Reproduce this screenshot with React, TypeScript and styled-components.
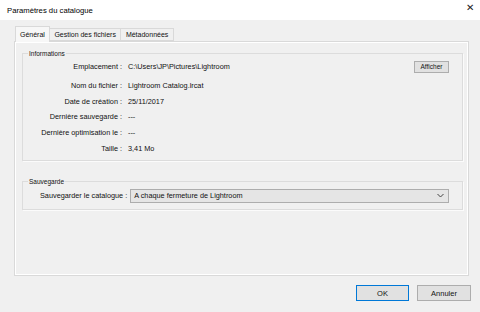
import React from "react";
import styled, { createGlobalStyle } from "styled-components";

const GlobalStyle = createGlobalStyle`
  html, body {
    margin: 0;
    padding: 0;
    background: #f0f0f0;
  }
  body {
    font-family: "Liberation Sans", Arial, sans-serif;
    color: #111;
  }
`;

const Window = styled.div`
  width: 480px;
  height: 312px;
  display: flex;
  flex-direction: column;
  background: #f0f0f0;
  overflow: hidden;
`;

const TitleBar = styled.div`
  height: 20px;
  flex: none;
  background: #ffffff;
  display: flex;
  align-items: center;
  justify-content: space-between;
  padding: 0 6px 0 7px;
  font-size: 7.7px;
  color: #000;
`;

const Close = styled.span`
  font-size: 10px;
  line-height: 1;
  color: #222;
  margin-top: -4px;
`;

const Body = styled.div`
  flex: 1;
  display: flex;
  flex-direction: column;
  padding: 6px 11px 0 14px;
`;

const TabStrip = styled.div`
  display: flex;
  align-items: flex-end;
  height: 15px;
  padding-left: 1px;
  position: relative;
  z-index: 1;
`;

const Tab = styled.div<{ active?: boolean }>`
  height: ${({ active }) => (active ? "16px" : "13px")};
  margin-bottom: ${({ active }) => (active ? "-1px" : "0")};
  padding: 0 ${({ active }) => (active ? "4px" : "4.5px")};
  box-sizing: border-box;
  display: flex;
  align-items: center;
  font-size: 7px;
  background: ${({ active }) => (active ? "#f7f7f7" : "#f0f0f0")};
  border: 1px solid #d9d9d9;
  border-bottom: ${({ active }) => (active ? "none" : "1px solid #d9d9d9")};
  margin-left: ${({ active }) => (active ? "0" : "-1px")};
`;

const Panel = styled.div`
  height: 235px;
  flex: none;
  box-sizing: border-box;
  border: 1px solid #d9d9d9;
  box-shadow: inset 1px 1px 0 #ffffff, inset -1px -1px 0 #ffffff;
  padding: 8px 5px 0 7px;
  display: flex;
  flex-direction: column;
  gap: 17px;
`;

const Group = styled.fieldset<{ h: number }>`
  margin: 0;
  height: ${({ h }) => h}px;
  box-sizing: border-box;
  border: 1px solid #dcdcdc;
  box-shadow: 1px 1px 0 #fbfbfb;
  padding: 0;
  position: relative;
`;

const Legend = styled.legend`
  font-size: 6.5px;
  padding: 0 1px;
  margin-left: 5px;
  line-height: 7px;
`;

const InfoGrid = styled.div`
  display: grid;
  grid-template-columns: 99px 1fr auto;
  grid-auto-rows: auto;
  column-gap: 6px;
  align-items: center;
  padding: 2px 13px 0 0;
`;

const Label = styled.div`
  text-align: right;
  font-size: 7.3px;
  white-space: nowrap;
  height: 15.8px;
  line-height: 15.8px;
`;

const Value = styled.div`
  font-size: 7.3px;
  white-space: nowrap;
  height: 15.8px;
  line-height: 15.8px;
`;

const SmallButton = styled.div`
  width: 35px;
  height: 12px;
  box-sizing: border-box;
  border: 1px solid #adadad;
  background: #e1e1e1;
  font-size: 6.5px;
  display: flex;
  align-items: center;
  justify-content: center;
`;

const Spacer = styled.div<{ h: number }>`
  grid-column: 1 / -1;
  height: ${({ h }) => h}px;
`;

const SaveRow = styled.div`
  display: flex;
  align-items: center;
  padding: 3px 13px 0 17px;
  gap: 3px;
`;

const SelectBox = styled.div`
  flex: 1;
  height: 14px;
  box-sizing: border-box;
  border: 1px solid #adadad;
  background: #e5e5e5;
  display: flex;
  align-items: center;
  justify-content: space-between;
  padding: 0 4px 0 3px;
  font-size: 7.3px;
`;

const Footer = styled.div`
  display: flex;
  justify-content: flex-end;
  gap: 8px;
  padding-top: 9px;
  margin-right: -2px;
`;

const DialogButton = styled.div<{ primary?: boolean }>`
  width: ${({ primary }) => (primary ? "53px" : "54px")};
  height: 16px;
  box-sizing: border-box;
  border: 1px solid ${({ primary }) => (primary ? "#0078d7" : "#adadad")};
  background: #e1e1e1;
  display: flex;
  align-items: center;
  justify-content: center;
  font-size: 7.5px;
`;

const rows: [string, string][] = [
  ["Nom du fichier :", "Lightroom Catalog.lrcat"],
  ["Date de création :", "25/11/2017"],
  ["Dernière sauvegarde :", "---"],
  ["Dernière optimisation le :", "---"],
  ["Taille :", "3,41 Mo"],
];

export default function App() {
  return (
    <Window>
      <GlobalStyle />
      <TitleBar>
        <span>Paramètres du catalogue</span>
        <Close>✕</Close>
      </TitleBar>
      <Body>
        <TabStrip>
          <Tab active>Général</Tab>
          <Tab>Gestion des fichiers</Tab>
          <Tab>Métadonnées</Tab>
        </TabStrip>
        <Panel>
          <Group h={111}>
            <Legend>Informations</Legend>
            <InfoGrid>
              <Label>Emplacement :</Label>
              <Value>C:\Users\JP\Pictures\Lightroom</Value>
              <SmallButton>Afficher</SmallButton>
              <Spacer h={3} />
              {rows.map(([l, v]) => (
                <React.Fragment key={l}>
                  <Label>{l}</Label>
                  <Value>{v}</Value>
                  <span />
                </React.Fragment>
              ))}
            </InfoGrid>
          </Group>
          <Group h={32}>
            <Legend>Sauvegarde</Legend>
            <SaveRow>
              <Label>Sauvegarder le catalogue :</Label>
              <SelectBox>
                <span>A chaque fermeture de Lightroom</span>
                <svg width="7" height="5" viewBox="0 0 7 5">
                  <path d="M0.5 1 L3.5 4 L6.5 1" fill="none" stroke="#444" strokeWidth="1" />
                </svg>
              </SelectBox>
            </SaveRow>
          </Group>
        </Panel>
        <Footer>
          <DialogButton primary>OK</DialogButton>
          <DialogButton>Annuler</DialogButton>
        </Footer>
      </Body>
    </Window>
  );
}
